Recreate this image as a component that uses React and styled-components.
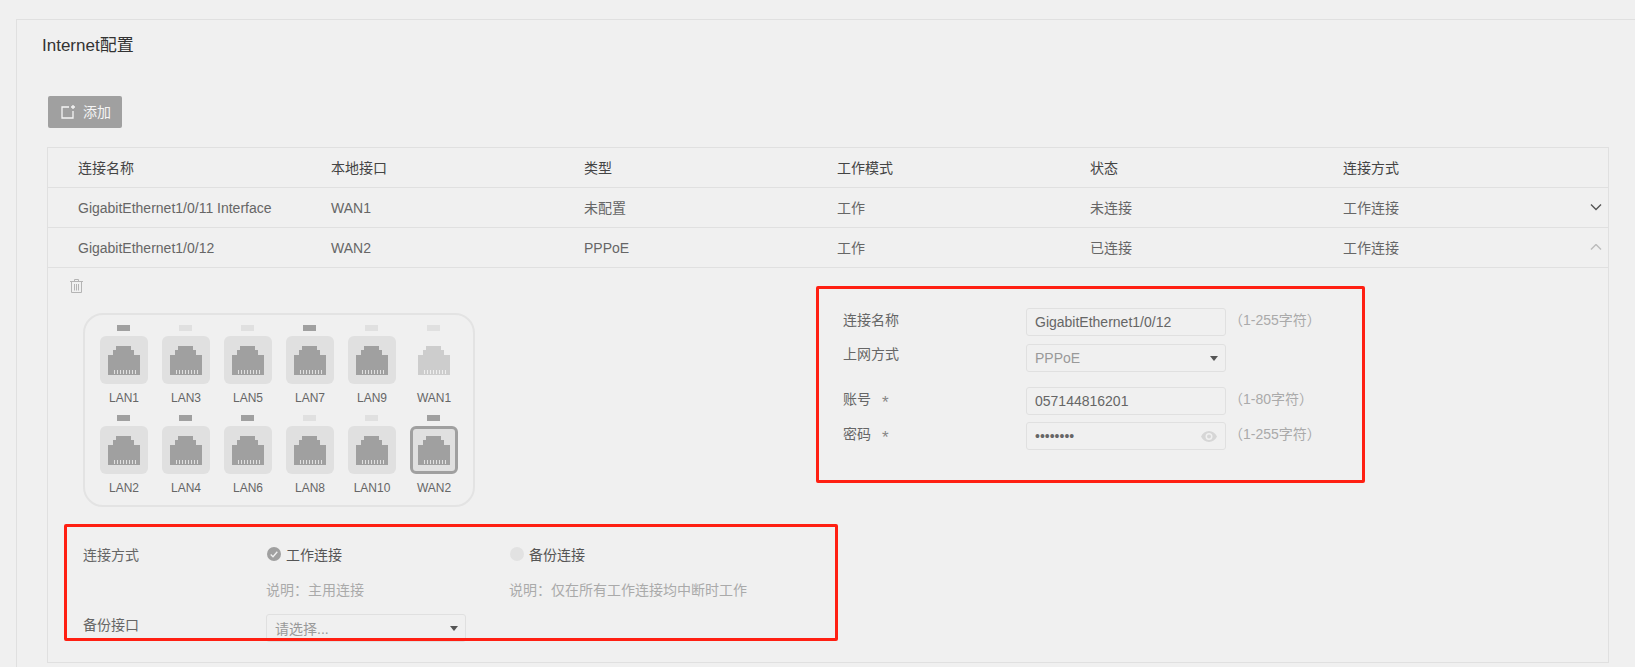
import styled, { createGlobalStyle } from "styled-components";

const GlobalStyle = createGlobalStyle`
  html, body {
    margin: 0;
    padding: 0;
    height: 667px;
    overflow: hidden;
    background: #f0f0f0;
    font-family: "Liberation Sans", "Noto Sans CJK SC", sans-serif;
    font-size: 14px;
    color: #666;
  }
  * { box-sizing: border-box; }
`;

const columns = ["连接名称", "本地接口", "类型", "工作模式", "状态", "连接方式"];
const rows = [
  { cells: ["GigabitEthernet1/0/11 Interface", "WAN1", "未配置", "工作", "未连接", "工作连接"], open: false },
  { cells: ["GigabitEthernet1/0/12", "WAN2", "PPPoE", "工作", "已连接", "工作连接"], open: true },
];
const ports = [
  { name: "LAN1", on: true },
  { name: "LAN3" },
  { name: "LAN5" },
  { name: "LAN7", on: true },
  { name: "LAN9" },
  { name: "WAN1", off: true },
  { name: "LAN2", on: true },
  { name: "LAN4", on: true },
  { name: "LAN6", on: true },
  { name: "LAN8" },
  { name: "LAN10" },
  { name: "WAN2", on: true, selected: true },
];

function AddIcon() {
  return (
    <svg width="15" height="14" viewBox="0 0 15 14" fill="none" stroke="#f5f5f5" strokeWidth="1.3">
      <path d="M8 2H1V13H12V6" />
      <path d="M12 0V4M10 2H14" />
    </svg>
  );
}

function TrashIcon() {
  return (
    <svg width="13" height="14" viewBox="0 0 13 14" fill="none" stroke="#b4b4b4" strokeWidth="1">
      <path d="M0 2.5H13M4.5 2.5V.5H8.5V2.5M1.5 2.5V13.5H11.5V2.5M4.5 5V11.5M6.5 5V11.5M8.5 5V11.5" />
    </svg>
  );
}

function Chevron({ up }) {
  return (
    <svg width="12" height="7" viewBox="0 0 12 7" fill="none" stroke={up ? "#bbb" : "#555"} strokeWidth="1.4">
      <path d={up ? "M1 5.5L6 .5L11 5.5" : "M1 .5L6 5.5L11 .5"} />
    </svg>
  );
}

function PortIcon({ color, pin }) {
  return (
    <svg width="32" height="29" viewBox="0 0 32 29">
      <path fill={color} d="M8 0H23V4H26V9H32V29H0V9H5V4H8Z" />
      {[6, 9, 12, 15, 18, 21, 24, 27].map((x) => (
        <rect key={x} x={x} y="24" width="1" height="4" fill={pin} />
      ))}
    </svg>
  );
}

function EyeIcon() {
  return (
    <svg width="16" height="11" viewBox="0 0 16 11">
      <path fill="#d6d6d6" fillRule="evenodd" d="M8 0C4.5 0 1.6 2.2 0 5.5 1.6 8.8 4.5 11 8 11s6.4-2.2 8-5.5C14.4 2.2 11.5 0 8 0ZM8 9a3.5 3.5 0 1 1 0-7 3.5 3.5 0 0 1 0 7Z" />
      <circle cx="8" cy="5.5" r="2" fill="#d6d6d6" />
    </svg>
  );
}

function Port({ port }) {
  return (
    <PortCell>
      <Led $on={port.on} />
      <Tile $off={port.off} $selected={port.selected}>
        <PortIcon color={port.off ? "#cdcdcd" : "#a0a0a0"} pin={port.off ? "#eee" : "#e0e0e0"} />
      </Tile>
      <PortName>{port.name}</PortName>
    </PortCell>
  );
}

function FormRow({ label, required, hint, gap, lift, children }) {
  return (
    <FieldRow $gap={gap}>
      <FieldLabel $lift={lift}>
        {label}
        {required && <Star>*</Star>}
      </FieldLabel>
      {children}
      {hint && <Hint>{hint}</Hint>}
    </FieldRow>
  );
}

export default function App() {
  return (
    <Page>
      <GlobalStyle />
      <Card>
        <Title>Internet配置</Title>
        <AddButton>
          <AddIcon />
          <AddLabel>添加</AddLabel>
        </AddButton>
        <Table>
          <Row $head>
            {columns.map((c) => (
              <span key={c}>{c}</span>
            ))}
          </Row>
          {rows.map((r) => (
            <Row key={r.cells[0]}>
              {r.cells.map((c, i) => (
                <span key={i}>{c}</span>
              ))}
              <Chevron up={r.open} />
            </Row>
          ))}
          <Detail>
            <LeftColumn>
              <TrashButton>
                <TrashIcon />
              </TrashButton>
              <PortPanel>
                {ports.map((p) => (
                  <Port key={p.name} port={p} />
                ))}
              </PortPanel>
              <ModeGrid>
                <span>连接方式</span>
                <Radio>
                  <RadioDot $checked>
                    <svg width="8" height="7" viewBox="0 0 8 7" fill="none" stroke="#f0f0f0" strokeWidth="1.3">
                      <path d="M.7 3.5L3 5.7L7.3 .8" />
                    </svg>
                  </RadioDot>
                  工作连接
                </Radio>
                <Radio>
                  <RadioDot />
                  备份连接
                </Radio>
                <span />
                <Note>说明：主用连接</Note>
                <Note>说明：仅在所有工作连接均中断时工作</Note>
                <BackupLabel>备份接口</BackupLabel>
                <SelectBox $wide>
                  请选择...
                  <Caret />
                </SelectBox>
              </ModeGrid>
            </LeftColumn>
            <FormColumn>
              <FormRow label="连接名称" hint="（1-255字符）" gap={8} lift={5}>
                <InputBox>
                  <TextInput readOnly value="GigabitEthernet1/0/12" />
                </InputBox>
              </FormRow>
              <FormRow label="上网方式" gap={15} lift={8}>
                <SelectBox>
                  PPPoE
                  <Caret />
                </SelectBox>
              </FormRow>
              <FormRow label="账号" required hint="（1-80字符）" gap={7} lift={5}>
                <InputBox>
                  <TextInput readOnly value="057144816201" />
                </InputBox>
              </FormRow>
              <FormRow label="密码" required hint="（1-255字符）" gap={0} lift={5}>
                <InputBox>
                  <TextInput readOnly type="password" value="12345678" />
                  <EyeIcon />
                </InputBox>
              </FormRow>
            </FormColumn>
          </Detail>
        </Table>
      </Card>
      <Callout $form />
      <Callout />
    </Page>
  );
}

const Page = styled.div`
  position: relative;
  width: 1635px;
  height: 667px;
  padding: 19px 0 0 16px;
  overflow: hidden;
`;

const Card = styled.div`
  width: 1640px;
  height: 660px;
  padding-left: 25px;
  border: 1px solid #e0e0e0;
`;

const Title = styled.div`
  height: 48px;
  padding-top: 2px;
  line-height: 48px;
  font-size: 17px;
  color: #333;
`;

const AddButton = styled.div`
  display: flex;
  align-items: center;
  gap: 7px;
  width: 74px;
  height: 32px;
  margin: 28px 0 19px 6px;
  padding-left: 13px;
  background: #a0a0a0;
  border-radius: 2px;
  color: #f5f5f5;
`;

const AddLabel = styled.span`
  margin-bottom: 2px;
`;

const Table = styled.div`
  width: 1562px;
  height: 516px;
  margin-left: 5px;
  border: 1px solid #e0e0e0;
`;

const Row = styled.div`
  display: grid;
  grid-template-columns: repeat(5, 253px) 1fr 12px;
  align-items: center;
  height: 40px;
  padding: 0 6px 0 30px;
  line-height: 20px;
  border-bottom: 1px solid #e0e0e0;
  color: ${(p) => (p.$head ? "#444" : "#666")};
`;

const Detail = styled.div`
  display: flex;
`;

const LeftColumn = styled.div`
  width: 795px;
  padding: 11px 0 0 22px;
`;

const TrashButton = styled.div`
  display: flex;
  height: 14px;
  margin-bottom: 20px;
`;

const PortPanel = styled.div`
  display: grid;
  grid-template-columns: repeat(6, 48px);
  column-gap: 14px;
  width: 392px;
  height: 194px;
  margin-left: 13px;
  padding: 10px 0 0 15px;
  border: 2px solid #e3e3e3;
  border-radius: 20px;
`;

const PortCell = styled.div`
  display: flex;
  flex-direction: column;
  align-items: center;
  height: 89px;
`;

const Led = styled.div`
  align-self: flex-start;
  width: 13px;
  height: 6px;
  margin: 0 0 5px 17px;
  background: ${(p) => (p.$on ? "#a0a0a0" : "#e0e0e0")};
`;

const Tile = styled.div`
  display: flex;
  align-items: center;
  justify-content: center;
  width: 48px;
  height: 48px;
  flex: none;
  background: ${(p) => (p.$off ? "transparent" : "#e0e0e0")};
  border: ${(p) => (p.$selected ? "3px solid #a0a0a0" : "none")};
  border-radius: 6px;
`;

const PortName = styled.div`
  margin-top: 7px;
  font-size: 12px;
  line-height: 14px;
  color: #666;
`;

const ModeGrid = styled.div`
  display: grid;
  grid-template-columns: 184px 243px 1fr;
  grid-template-rows: 20px 20px 28px;
  row-gap: 15px;
  align-items: center;
  margin: 37px 0 0 13px;
`;

const Radio = styled.div`
  display: flex;
  align-items: center;
  gap: 5px;
  color: #555;
`;

const RadioDot = styled.span`
  display: flex;
  align-items: center;
  justify-content: center;
  width: 14px;
  height: 14px;
  border-radius: 50%;
  background: ${(p) => (p.$checked ? "#a0a0a0" : "#e2e2e2")};
`;

const Note = styled.div`
  margin-left: -1px;
  color: #aaa;
  white-space: nowrap;
`;

const BackupLabel = styled.span`
  margin-bottom: 8px;
`;

const FormColumn = styled.div`
  padding-top: 40px;
`;

const FieldRow = styled.div`
  display: flex;
  align-items: center;
  height: 28px;
  margin-bottom: ${(p) => p.$gap}px;
`;

const FieldLabel = styled.div`
  width: 183px;
  height: 20px;
  line-height: 20px;
  margin-bottom: ${(p) => p.$lift}px;
`;

const Star = styled.span`
  margin-left: 11px;
  font-size: 17px;
  line-height: 14px;
  color: #888;
  vertical-align: -4px;
`;

const InputBox = styled.div`
  display: flex;
  align-items: center;
  width: 200px;
  height: 28px;
  padding: 0 8px;
  border: 1px solid #e0e0e0;
  border-radius: 3px;
`;

const TextInput = styled.input`
  flex: 1;
  width: 100%;
  min-width: 0;
  padding: 0;
  border: none;
  outline: none;
  background: transparent;
  font: inherit;
  color: #666;
`;

const SelectBox = styled.div`
  display: flex;
  align-items: center;
  justify-content: space-between;
  width: 200px;
  height: 28px;
  margin-left: ${(p) => (p.$wide ? -1 : 0)}px;
  padding: 0 7px 0 8px;
  border: 1px solid #e0e0e0;
  border-radius: 3px;
  color: #999;
`;

const Caret = styled.span`
  width: 0;
  height: 0;
  border-left: 4.5px solid transparent;
  border-right: 4.5px solid transparent;
  border-top: 5px solid #555;
`;

const Hint = styled.div`
  margin: 0 0 7px 3px;
  font-size: 14px;
  color: #aaa;
`;

const Callout = styled.div`
  position: absolute;
  left: ${(p) => (p.$form ? 816 : 64)}px;
  top: ${(p) => (p.$form ? 286 : 524)}px;
  width: ${(p) => (p.$form ? 549 : 774)}px;
  height: ${(p) => (p.$form ? 197 : 117)}px;
  border: 3px solid #ff1f12;
  border-radius: 2px;
`;
